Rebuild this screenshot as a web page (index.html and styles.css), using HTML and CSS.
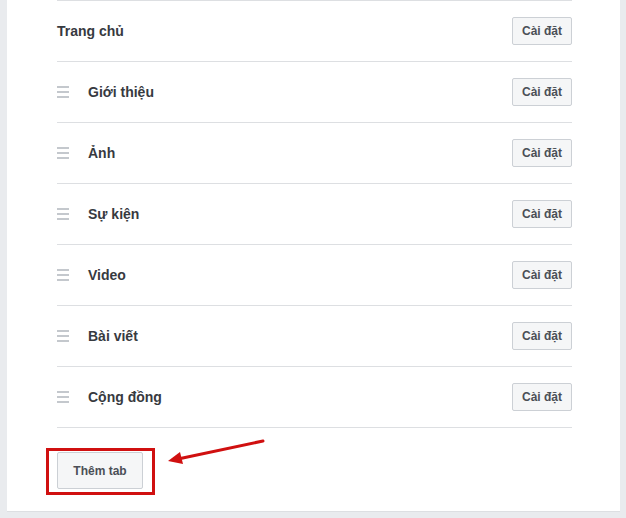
FILE: index.html
```html
<!DOCTYPE html>
<html lang="vi">
<head>
    <meta charset="UTF-8">
    <meta name="viewport" content="width=device-width, initial-scale=1.0">
    <title>Tab</title>
    <link rel="stylesheet" href="styles.css">
</head>
<body>
    <div class="panel">
        <ul class="tab-list">
            <li class="tab-row">
                <span class="tab-name">Trang chủ</span>
                <button class="btn">Cài đặt</button>
            </li>
            <li class="tab-row">
                <span class="handle"></span>
                <span class="tab-name">Giới thiệu</span>
                <button class="btn">Cài đặt</button>
            </li>
            <li class="tab-row">
                <span class="handle"></span>
                <span class="tab-name">Ảnh</span>
                <button class="btn">Cài đặt</button>
            </li>
            <li class="tab-row">
                <span class="handle"></span>
                <span class="tab-name">Sự kiện</span>
                <button class="btn">Cài đặt</button>
            </li>
            <li class="tab-row">
                <span class="handle"></span>
                <span class="tab-name">Video</span>
                <button class="btn">Cài đặt</button>
            </li>
            <li class="tab-row">
                <span class="handle"></span>
                <span class="tab-name">Bài viết</span>
                <button class="btn">Cài đặt</button>
            </li>
            <li class="tab-row">
                <span class="handle"></span>
                <span class="tab-name">Cộng đồng</span>
                <button class="btn">Cài đặt</button>
            </li>
        </ul>
        <div class="footer">
            <div class="highlight">
                <button class="btn btn-add">Thêm tab</button>
            </div>
            <svg class="arrow" width="110" height="30" viewBox="0 0 110 30">
                <line x1="99" y1="7" x2="14" y2="25" stroke="#d01010" stroke-width="3" stroke-linecap="round"/>
                <polygon points="4,27 16,18 19,30" fill="#d01010"/>
            </svg>
        </div>
    </div>
</body>
</html>
```

FILE: styles.css
```css
body {
    margin: 0;
    background-color: #e9ebee;
    font-family: "Liberation Sans", Arial, sans-serif;
}

.panel {
    background-color: #fff;
    margin: 0 6px 6px 7px;
    padding: 0 48px 24px 50px;
    border-bottom: 1px solid #dddfe2;
    height: 512px;
    box-sizing: border-box;
}

.tab-list {
    list-style: none;
    margin: 0;
    padding: 0;
    border-top: 1px solid #dddfe2;
}

.tab-row {
    display: flex;
    align-items: center;
    height: 60px;
    border-bottom: 1px solid #dddfe2;
}

.handle {
    width: 12px;
    height: 12px;
    margin-right: 19px;
    background: linear-gradient(#c4c8cd 0 2px, transparent 2px 5px, #c4c8cd 5px 7px, transparent 7px 10px, #c4c8cd 10px 12px);
}

.tab-name {
    flex: 1;
    font-size: 14px;
    font-weight: bold;
    color: #373a3f;
}

.btn {
    font-family: inherit;
    font-size: 12px;
    font-weight: bold;
    color: #4b4f56;
    background-color: #f5f6f7;
    border: 1px solid #ccd0d5;
    border-radius: 2px;
    height: 28px;
    width: 60px;
    padding: 0;
    cursor: pointer;
}

.footer {
    display: flex;
    align-items: flex-start;
    padding-top: 20px;
    margin-left: -11px;
}

.highlight {
    border: 3px solid #d01010;
    padding: 1px 9px 3px 8px;
}

.btn-add {
    width: 86px;
    height: 37px;
}

.arrow {
    margin-left: 9px;
    margin-top: -14px;
}
```
